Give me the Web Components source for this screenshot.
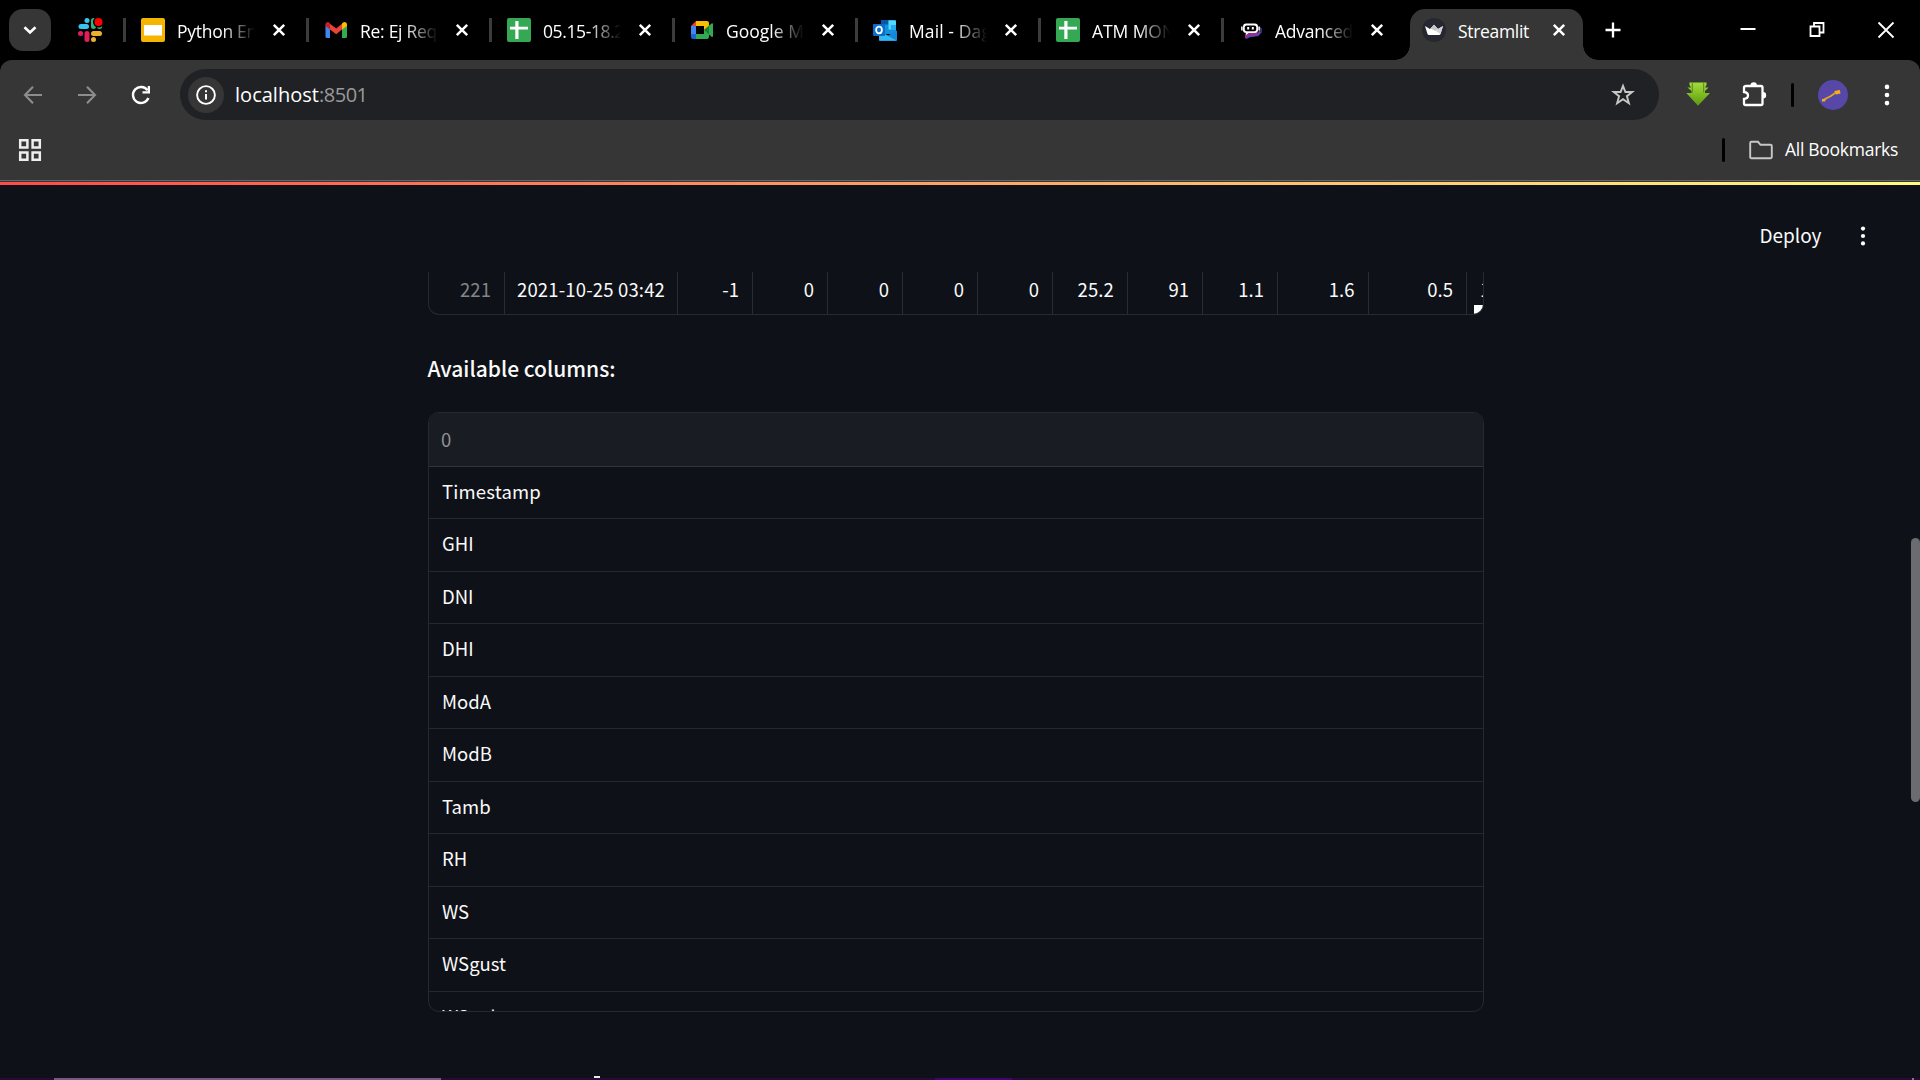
<!DOCTYPE html>
<html lang="en">
<head>
<meta charset="utf-8">
<title>Streamlit</title>
<style>
html,body{margin:0;height:100%;background:#0e1117;overflow:hidden}
body{font-family:"Open Sans","Noto Sans",sans-serif;color:#fff}
</style>
</head>
<body>
<browser-window></browser-window>
<script>
const define=(name,html,after)=>customElements.define(name,class extends HTMLElement{
  connectedCallback(){
    if(this.shadowRoot)return;
    const root=this.attachShadow({mode:'open'});
    root.innerHTML=html;
    if(after)after.call(this,root);
  }
});

const fit=(el,w)=>{
  if(!w)return;
  const n=[...el.textContent].length;
  const cur=el.getBoundingClientRect().width;
  if(cur)el.style.letterSpacing=((w-cur)/n).toFixed(3)+'px';
};

define('fit-text',`<style>:host{display:inline-block;white-space:pre}span{display:inline-block;white-space:pre}</style><span></span>`,function(r){
  const s=r.querySelector('span');s.textContent=this.getAttribute('text');
  fit(s,+this.getAttribute('w'));
});

const icons={
slack:`<g stroke-width="5" stroke-linecap="round"><path d="M3 8.500H8.500" stroke="#36c5f0"/><path d="M9 2.500V2.600" stroke="#36c5f0"/><path d="M15.500 2.500V8.500" stroke="#2eb67d"/><path d="M21.500 8.500h.1" stroke="#2eb67d"/><path d="M15.500 15.500H21.500" stroke="#ecb22e"/><path d="M15.500 21.500v.1" stroke="#ecb22e"/><path d="M9 15.500V21.500" stroke="#e01e5a"/><path d="M2.500 15.500h.1" stroke="#e01e5a"/></g><circle cx="20.500" cy="4" r="5.500" fill="#000"/><circle cx="20.500" cy="4" r="4" fill="#f00"/>`,
slides:`<rect width="24" height="24" rx="2" fill="#f4b400"/><rect x="3" y="7" width="18" height="10.500" fill="#fff"/>`,
sheets:`<rect width="24" height="24" rx="2" fill="#34a853"/><path d="M3 8.700H21V11.500H3zM8.300 3H11.500V21H8.300z" fill="#fff"/>`,
gmail:`<path d="M1.500 7V18.500a1.500 1.500 0 0 0 1.500 1.500H6V10z" fill="#4285f4"/><path d="M18 10v10h3.500a1.500 1.500 0 0 0 1.500-1.500V7z" fill="#34a853"/><path d="M6 5.800l6.200 4.800L18 5.800V11.500l-5.800 4.700L6 11.500z" fill="#ea4335"/><path d="M1.500 8V6.500C1.500 4.500 3.800 3 5.500 4.800L6 5.500v6z" fill="#c5221f"/><path d="M18 11.500v-6l.8-.7C20.500 3 23 4.500 23 6.500V8z" fill="#fbbc04"/>`,
meet:`<path d="M1 8L6 3V8z" fill="#ea4335"/><path d="M6 3H17a2 2 0 0 1 2 2V10l-5 3V8H6z" fill="#fbbc04"/><path d="M1 8H6v8H1z" fill="#4285f4"/><path d="M1 16H6v5H3a2 2 0 0 1-2-2z" fill="#1967d2"/><path d="M6 16h8v-3l5-2v8a2 2 0 0 1-2 2H6z" fill="#34a853"/><path d="M14 12l7.500-6.500q1.500-.8 1.500 1V18q0 1.500-1.500.7z" fill="#34a853"/><path d="M14 12l5-4.300v8.600z" fill="#188038"/>`,
outlook:`<rect x="8" y="2" width="15" height="14" rx="1" fill="#1490df"/><path d="M8 3q0-1 1-1h6.500v4.500H8z" fill="#0a55a5"/><path d="M15.500 2.500H22q1 0 1 1v8h-7.500z" fill="#50d9ff"/><path d="M18 7h5v5h-5z" fill="#28a8ea"/><path d="M6 12.500l9 5 9-5V22q0 1-1 1H7q-1 0-1-1z" fill="#1587d8"/><path d="M6 13l17.500 9.500H7q-1 0-1-1z" fill="#35b8f1"/><rect y="6" width="12" height="12" rx="1" fill="#0a6cce"/><ellipse cx="6" cy="12" rx="2.900" ry="3.300" fill="none" stroke="#fff" stroke-width="1.800"/>`,
bot:`<path d="M6 15.500L19 14.500l2-3v4l-3 2.500-7 .5-5 2z" fill="#a02c92"/><path d="M20.500 9.500l1.500 1.200v3.500l-3 3.300-8 1-4 2" fill="none" stroke="#3d52b5" stroke-width="1.300"/><rect x="4" y="5.500" width="15" height="9.500" rx="3.200" fill="#fff"/><rect x="5.800" y="7.500" width="11.400" height="5.700" rx="1.800" fill="#000"/><path d="M2.900 8.500v4M20.100 8.500v4" stroke="#fff" stroke-width="1.500"/><path d="M8.200 8.900h2v2.600h-2zM12.800 8.900h2v2.600h-2z" fill="#fff"/><path d="M7 14V17l3.500-2.500z" fill="#fff"/>`,
crown:`<circle cx="12" cy="12" r="12" fill="#262730"/><path d="M3 8l5 3L12 6.800l4 4.200 5-3-2.500 8q-.3 1-1.500 1H7q-1.200 0-1.500-1z" fill="#fff"/><path d="M21 8l-5 3-2 2 4.500 3z" fill="#d2d2d6"/><path d="M12 6.800l4 4.200-2.500 2L8.500 10.500z" fill="#c4c4ca"/>`,
close:`<path d="M6.800 6.800L17.200 17.200M17.200 6.800L6.800 17.200" stroke="#fff" stroke-width="2.500" fill="none"/>`,
plus:`<path d="M12 4.500V19.500M4.500 12H19.500" stroke="#fff" stroke-width="2.300" fill="none"/>`,
chev:`<path d="M6.500 9.300l5.500 5.200 5.500-5.200" stroke="#fff" stroke-width="2.600" fill="none"/>`,
min:`<path d="M4.500 11H19.500" stroke="#fff" stroke-width="2"/>`,
restore:`<path d="M5.500 8.500H14.500V18H5.500zM9 8.500V5H18.500V14.500H14.500" stroke="#fff" stroke-width="1.800" fill="none"/>`,
winclose:`<path d="M4.500 4.500l15 15M19.500 4.500l-15 15" stroke="#fff" stroke-width="1.800"/>`,
back:`<path d="M21 12H4.500M12 3.800L4 12l8 8.200" stroke="#8d8d8d" stroke-width="2.100" fill="none"/>`,
fwd:`<path d="M3 12H19.500M12 3.800L20 12l-8 8.200" stroke="#8d8d8d" stroke-width="2.100" fill="none"/>`,
reload:`<path d="M19.400 15A8 8 0 1 1 18.500 7.300" stroke="#fff" stroke-width="2.400" fill="none"/><path d="M21 3V10.500H13.500V8.200H18.700V3z" fill="#fff"/>`,
info:`<circle cx="12" cy="12" r="8.900" stroke="#fff" stroke-width="1.900" fill="none"/><path d="M11 11h2v5.500h-2zM11 7.300h2v2h-2z" fill="#fff"/>`,
star:`<path d="M12 2.800L14.400 9H21.200L15.900 13.200 17.900 20.200 12 16.200 6.100 20.200 8.100 13.200 2.800 9H9.600z" stroke="#c7c7c7" stroke-width="1.900" fill="none"/>`,
down:`<defs><linearGradient id="g" x2="0" y2="1"><stop stop-color="#a4dc3a"/><stop offset="1" stop-color="#5c9a0d"/></linearGradient></defs><path d="M3.500-.5H20.500V2L19 4.500H22.500L19 8V10H24L12 22.700.3 10H5.500V8L1.500 4.500H5L3.500 2z" fill="url(#g)"/><path d="M6.300 0v9.500M17.700 0v9.500" stroke="#4f8015" stroke-width=".9"/>`,
puzzle:`<path d="M4 3H19q1.500 0 1.500 1.500V20.500q0 1.500-1.500 1.500H3.500Q2 22 2 20.500V16q4-.5 4-3.500T2 9V4.500Q2 3 4 3z" stroke="#fff" stroke-width="2.300" fill="none"/><path d="M8.500 2.500a3.200 3.200 0 0 1 6.400 0zM21 9a3.200 3.200 0 0 1 0 6.400z" fill="#fff"/>`,
avatar:`<circle cx="12" cy="12" r="12" fill="#5548a8"/><path d="M13 6.500q5-1.500 10 0M3 7q5 2 7-3M4 19q9 2 17-4" stroke="#75409d" stroke-width=".5" fill="none"/><path d="M4 16l6-3 4-2.800L17.500 9" stroke="#eba31c" stroke-width="1.500" fill="none"/><path d="M13 8.800l4.500-.9.500 2.800-3.500.8zM3.200 15.200l3.300.3-1 1.700H3.200z" fill="#f4ad21"/>`,
dots:`<g fill="#fff"><circle cx="12" cy="3.900" r="2.300"/><circle cx="12" cy="12" r="2.300"/><circle cx="12" cy="20.100" r="2.300"/></g>`,
folder:`<path d="M1.200 5Q1.200 3.800 2.400 3.800H9l2.500 3H21.500Q22.800 6.800 22.800 8V19q0 1.200-1.200 1.200H2.400Q1.200 20.200 1.200 19z" stroke="#c7c7c7" stroke-width="1.900" fill="none"/>`,
apps:`<path d="M2.200 2.200h7.200v7.200H2.200zM14.600 2.200h7.200v7.200h-7.200zM2.200 14.600h7.200v7.200H2.200zM14.600 14.600h7.200v7.200h-7.200z" stroke="#eee" stroke-width="2.500" fill="none"/>`
};
define('ui-icon',`<style>:host{display:block;flex:none;width:24px;height:24px}svg{display:block;width:100%;height:100%;overflow:visible}</style><svg viewBox="0 0 24 24"></svg>`,function(r){
  r.querySelector('svg').innerHTML=icons[this.getAttribute('name')]||'';
  const s=this.getAttribute('size');if(s)this.style.width=this.style.height=s+'px';
});

define('browser-tab',`<style>
:host{display:flex;flex:none;align-items:center;width:183px;height:24px;box-sizing:border-box;border-left:3px solid #3c3c3c;padding-left:15px}
:host([active]){border-left-color:transparent;padding-left:15px}
.label{width:78px;margin-left:12px;overflow:hidden;font-size:17.500px;line-height:28px;margin-top:2px;white-space:pre;-webkit-mask-image:linear-gradient(90deg,#000 58%,transparent)}
:host([active]) .label{-webkit-mask-image:none;width:77px}
.x{margin-left:12px}
</style><ui-icon class="fav"></ui-icon><div class="label"><fit-text></fit-text></div><ui-icon class="x" name="close"></ui-icon>`,function(r){
  r.querySelector('.fav').shadowRoot.querySelector('svg').innerHTML=icons[this.getAttribute('icon')];
  const f=r.querySelector('fit-text'),s=f.shadowRoot.querySelector('span');
  s.textContent=this.getAttribute('label');
  fit(s,+this.getAttribute('w'));
});

define('tab-strip',`<style>
:host{display:flex;height:60px;background:#000;align-items:flex-start}
.search{width:42px;height:42px;margin:9px 0 0 9px;border-radius:14px;background:#363636;display:grid;place-items:center;flex:none}
.pin{margin:18px 21px 0 27px}
.tabs{display:flex;padding-top:18px}
.active{position:relative;box-sizing:border-box;width:173px;height:51px;margin-top:9px;margin-left:6px;background:#363636;border-radius:15px 15px 0 0;padding-top:9px;flex:none}
.active:before,.active:after{content:"";position:absolute;bottom:0;width:15px;height:15px}
.active:before{left:-15px;background:radial-gradient(circle at 0 0,transparent 14.500px,#363636 15px)}
.active:after{right:-15px;background:radial-gradient(circle at 100% 0,transparent 14.500px,#363636 15px)}
.active browser-tab{margin-left:-6px}
.plus{margin:18px 0 0 18px}
.win{display:flex;gap:45px;margin:18px 22.500px 0 auto}
</style>
<div class="search"><ui-icon name="chev"></ui-icon></div><ui-icon class="pin" name="slack"></ui-icon>
<div class="tabs">
<browser-tab icon="slides" label="Python En" w="80"></browser-tab>
<browser-tab icon="gmail" label="Re: Ej Req" w="77"></browser-tab>
<browser-tab icon="sheets" label="05.15-18.2" w="81"></browser-tab>
<browser-tab icon="meet" label="Google M" w="78"></browser-tab>
<browser-tab icon="outlook" label="Mail - Dag" w="82"></browser-tab>
<browser-tab icon="sheets" label="ATM MON" w="83"></browser-tab>
<browser-tab icon="bot" label="Advanced" w="78"></browser-tab></div>
<div class="active"><browser-tab active icon="crown" label="Streamlit" w="71"></browser-tab></div>
<ui-icon class="plus" name="plus"></ui-icon>
<div class="win"><ui-icon name="min"></ui-icon><ui-icon name="restore"></ui-icon><ui-icon name="winclose"></ui-icon></div>`);

define('tool-bar',`<style>
:host{display:block;height:120px;background:#000}
.bg{background:#363636;border-radius:12px 12px 0 0;height:120px}
.row{display:flex;align-items:center;height:51px;padding-top:9px}
.omni{display:flex;align-items:center;box-sizing:border-box;width:1479px;height:51px;border-radius:26px;background:#202124;margin-left:27px;padding:0 24px 0 7.500px}
.i{width:36px;height:36px;border-radius:50%;background:#363636;display:grid;place-items:center;margin-right:11.500px}
.url{font-size:20px;line-height:30px;flex:1}
.port{color:#9a9a9a}
.sep{width:3px;height:24px;border-radius:2px;background:#000}
.marks{display:flex;align-items:center;height:60px;padding:0 22px 0 18px}
.bm{font-size:17.500px;margin-left:12px;margin-top:-2px}
</style><div class="bg"><div class="row">
<ui-icon name="back" style="margin-left:21px"></ui-icon><ui-icon name="fwd" style="margin-left:30px"></ui-icon><ui-icon name="reload" style="margin-left:30px"></ui-icon>
<div class="omni"><div class="i"><ui-icon name="info"></ui-icon></div><div class="url"><fit-text text="localhost" w="84"></fit-text><fit-text class="port" text=":8501" w="48.500"></fit-text></div><ui-icon name="star"></ui-icon></div>
<ui-icon name="down" style="margin-left:27px"></ui-icon><ui-icon name="puzzle" style="margin-left:32px"></ui-icon><div class="sep" style="margin-left:25px"></div><ui-icon name="avatar" size="30" style="margin-left:24px"></ui-icon><ui-icon name="dots" style="margin-left:27px"></ui-icon></div>
<div class="marks"><ui-icon name="apps"></ui-icon><div class="sep" style="margin-left:auto"></div><ui-icon name="folder" style="margin-left:24px"></ui-icon><fit-text class="bm" text="All Bookmarks" w="113"></fit-text></div></div>`);

define('data-row',`<style>
:host{display:flex;height:43px;box-sizing:border-box;width:1056px;border:1px solid #262a30;border-top:0;border-radius:0 0 11px 11px;overflow:hidden;position:relative}
.c{box-sizing:border-box;flex:none;height:42px;border-right:1px solid #2a2c31;padding-right:13px;text-align:right;font-size:18.500px;line-height:34px}
.c.index{color:#83858a}
.c:last-of-type{border:0}
.grip{position:absolute;right:0;bottom:0;width:9px;height:9px;background:#fff}
</style>`,function(r){
  [['221',76,31],['2021-10-25 03:42',173,148],['-1',75],['0',75],['0',75],['0',75],['0',75],['25.2',75,36.5],['91',75],['1.1',75],['1.6',90.5],['0.5',98.5],['1.1',39]].forEach(([t,w,f],i)=>{
    const c=document.createElement('div');c.className=i?'c':'c index';c.style.width=w+'px';
    if(i==1)c.style.paddingRight='12px';
    if(i==12){c.style.textAlign='left';c.style.paddingLeft='13px'}
    r.append(c);const x=document.createElement('fit-text');x.setAttribute('text',t);if(f)x.setAttribute('w',f);c.append(x);
  });
  const g=document.createElement('span');g.className='grip';r.append(g);
});

define('column-list',`<style>
:host{display:block;box-sizing:border-box;width:1056px;height:600px;border:1px solid #262a30;border-radius:11px;overflow:hidden}
.h,.r{box-sizing:border-box;padding-left:13px;font-size:18.500px;display:flex;align-items:center;padding-bottom:3px}
.h{height:53.500px;background:#1a1c24;color:#8f9195;border-bottom:1px solid #31343b;padding-left:12px;padding-bottom:1px}
.r{height:52.500px;border-bottom:1px solid #26282d}
</style><div class="h"><fit-text text="0"></fit-text></div>`,function(r){
  [['Timestamp',99],['GHI'],['DNI'],['DHI'],['ModA'],['ModB'],['Tamb'],['RH'],['WS'],['WSgust'],['WSstdev']].forEach(([t,w])=>{
    const d=document.createElement('div');d.className='r';r.append(d);
    const x=document.createElement('fit-text');x.setAttribute('text',t);if(w)x.setAttribute('w',w);d.append(x);
  });
});

define('app-page',`<style>
:host{display:block;flex:1;position:relative;overflow:hidden;background:#0e1117;color:#fafafa;font-family:"Noto Sans CJK SC","Noto Sans",sans-serif}
.line{height:3px;background:linear-gradient(90deg,#ff4b4b,#fffd80)}
header{display:flex;align-items:center;height:87px;padding-right:46px;box-sizing:border-box;padding-top:14px}
header fit-text{margin-left:auto;font-size:19px;margin-top:-3px}
header ui-icon{margin-left:30.500px}
main{margin-left:428px}
h4{margin:0 0 0 -.5px;height:97px;display:flex;align-items:center;font-size:21px;font-weight:500;padding-top:9px;box-sizing:border-box}
.thumb{position:absolute;right:0;top:356px;width:9px;height:264px;background:#6b6c70;border-radius:5px}
.next{width:6px;height:2px;background:#e8e8e8;margin:64px 0 0 166px}
</style><div class="line"></div><header><fit-text text="Deploy" w="62"></fit-text><ui-icon name="dots" size="22"></ui-icon></header>
<main><data-row></data-row><h4><fit-text text="Available columns:" w="188"></fit-text></h4><column-list></column-list><div class="next"></div></main><div class="thumb"></div>`);

define('task-bar',`<style>:host{display:flex;height:2px;background:#270a3a}.a{width:387px;margin-left:54px;background:#765a83}.b{width:77px;margin-left:494px;background:#430473}.c{width:2px;margin-left:auto;margin-right:6px;background:#84758b}</style><div class="a"></div><div class="b"></div><div class="c"></div>`);

define('browser-window',`<style>:host{display:flex;flex-direction:column;width:1920px;height:1080px}.edge{height:2px;flex:none;box-sizing:border-box;background:#363636;border-top:1px solid #666}tab-strip,tool-bar,task-bar{flex:none}</style><tab-strip></tab-strip><tool-bar></tool-bar><div class="edge"></div><app-page></app-page><task-bar></task-bar>`);
</script>
</body>
</html>
